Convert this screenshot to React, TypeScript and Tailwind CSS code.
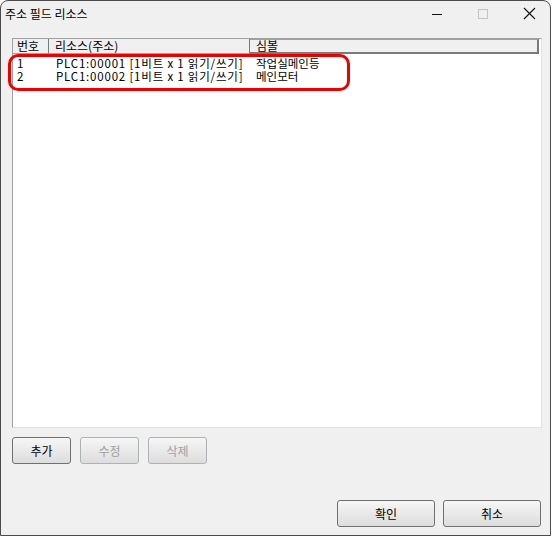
import React from 'react';

const rows = [
    { no: '1', res: 'PLC1:00001 [1비트 x 1 읽기/쓰기]', sym: '작업실메인등' },
    { no: '2', res: 'PLC1:00002 [1비트 x 1 읽기/쓰기]', sym: '메인모터' },
];

function Btn({ label, disabled = false, className = '' }: { label: string; disabled?: boolean; className?: string }) {
    return (
        <button
            className={`flex items-center justify-center rounded-[3px] border bg-gradient-to-b from-[#f6f6f6] to-[#dddddd] text-[12px] font-normal ${disabled ? 'border-[#adb2b5] text-[#a0a0a0]' : 'border-[#707070] text-black'} ${className}`}
        >
            {label}
        </button>
    );
}

export default function App() {
    return (
        <div className="h-[536px] w-[553px] bg-white font-['Noto_Sans_CJK_KR',sans-serif] text-[12px] leading-none text-black">
            <div className="relative flex h-[536px] w-[551px] flex-col rounded-t-[8px] border border-[#4b4b4b] bg-[#f0f0f0]">
                {/* title bar */}
                <div className="flex h-[29px] shrink-0 items-center pl-[4px]">
                    <span className="flex-1 pb-[4px] text-[12px]">주소 필드 리소스</span>
                    <div className="flex h-full items-center">
                        <svg width="12" height="12" viewBox="0 0 12 12" className="mb-[4px] mr-[34px]">
                            <path d="M1 6.5h10" stroke="#111" strokeWidth="1" />
                        </svg>
                        <svg width="12" height="12" viewBox="0 0 12 12" className="mb-[4px] mr-[34px]">
                            <rect x="1.5" y="1.5" width="9" height="9" fill="none" stroke="#c4c4c4" strokeWidth="1" />
                        </svg>
                        <svg width="13" height="13" viewBox="0 0 13 13" className="mb-[4px] mr-[14px]">
                            <path d="M1 1l11 11M12 1L1 12" stroke="#111" strokeWidth="1.1" />
                        </svg>
                    </div>
                </div>

                {/* list view */}
                <div className="ml-[11px] mt-[8px] flex h-[390px] w-[530px] flex-col border border-b-[#e3e3e3] border-l-[#a0a0a0] border-r-[#e3e3e3] border-t-[#a0a0a0] bg-white">
                    <div className="flex h-[15px] shrink-0">
                        <div className="flex w-[36px] items-center border-b border-r border-b-[#a0a0a0] border-r-[#7a7a7a] bg-[#f0f0f0] pl-[4px]">번호</div>
                        <div className="flex w-[201px] items-center border-b border-r border-b-[#a0a0a0] border-r-[#7a7a7a] bg-[#f0f0f0] pl-[6px]">리소스(주소)</div>
                        <div className="flex w-[289px] items-center border-b-2 border-r-2 border-t border-b-[#7a7a7a] border-r-[#7a7a7a] border-t-[#a0a0a0] bg-[#f0f0f0] pl-[6px]">심볼</div>
                        <div className="flex-1" />
                    </div>
                    <div className="flex flex-col pt-[2px]">
                        {rows.map((r) => (
                            <div key={r.no} className="flex h-[13px] items-center text-[11.5px] leading-[12px]">
                                <div className="w-[36px] pl-[4px]">{r.no}</div>
                                <div className="w-[201px] whitespace-pre pl-[7px] tracking-[0.8px]">{r.res}</div>
                                <div className="pl-[6px]">{r.sym}</div>
                            </div>
                        ))}
                    </div>
                </div>

                {/* highlight */}
                <div className="pointer-events-none absolute left-[7px] top-[53px] h-[37px] w-[342px] rounded-[10px] border-[3px] border-[#ee0000]" />

                {/* edit buttons */}
                <div className="ml-[11px] mt-[9px] flex gap-[9px]">
                    <Btn label="추가" className="h-[27px] w-[59px]" />
                    <Btn label="수정" disabled className="h-[27px] w-[59px]" />
                    <Btn label="삭제" disabled className="h-[27px] w-[59px]" />
                </div>

                {/* dialog buttons */}
                <div className="mb-[8px] mr-[9px] mt-auto flex justify-end gap-[8px]">
                    <Btn label="확인" className="h-[27px] w-[98px]" />
                    <Btn label="취소" className="h-[27px] w-[98px]" />
                </div>
            </div>
        </div>
    );
}
